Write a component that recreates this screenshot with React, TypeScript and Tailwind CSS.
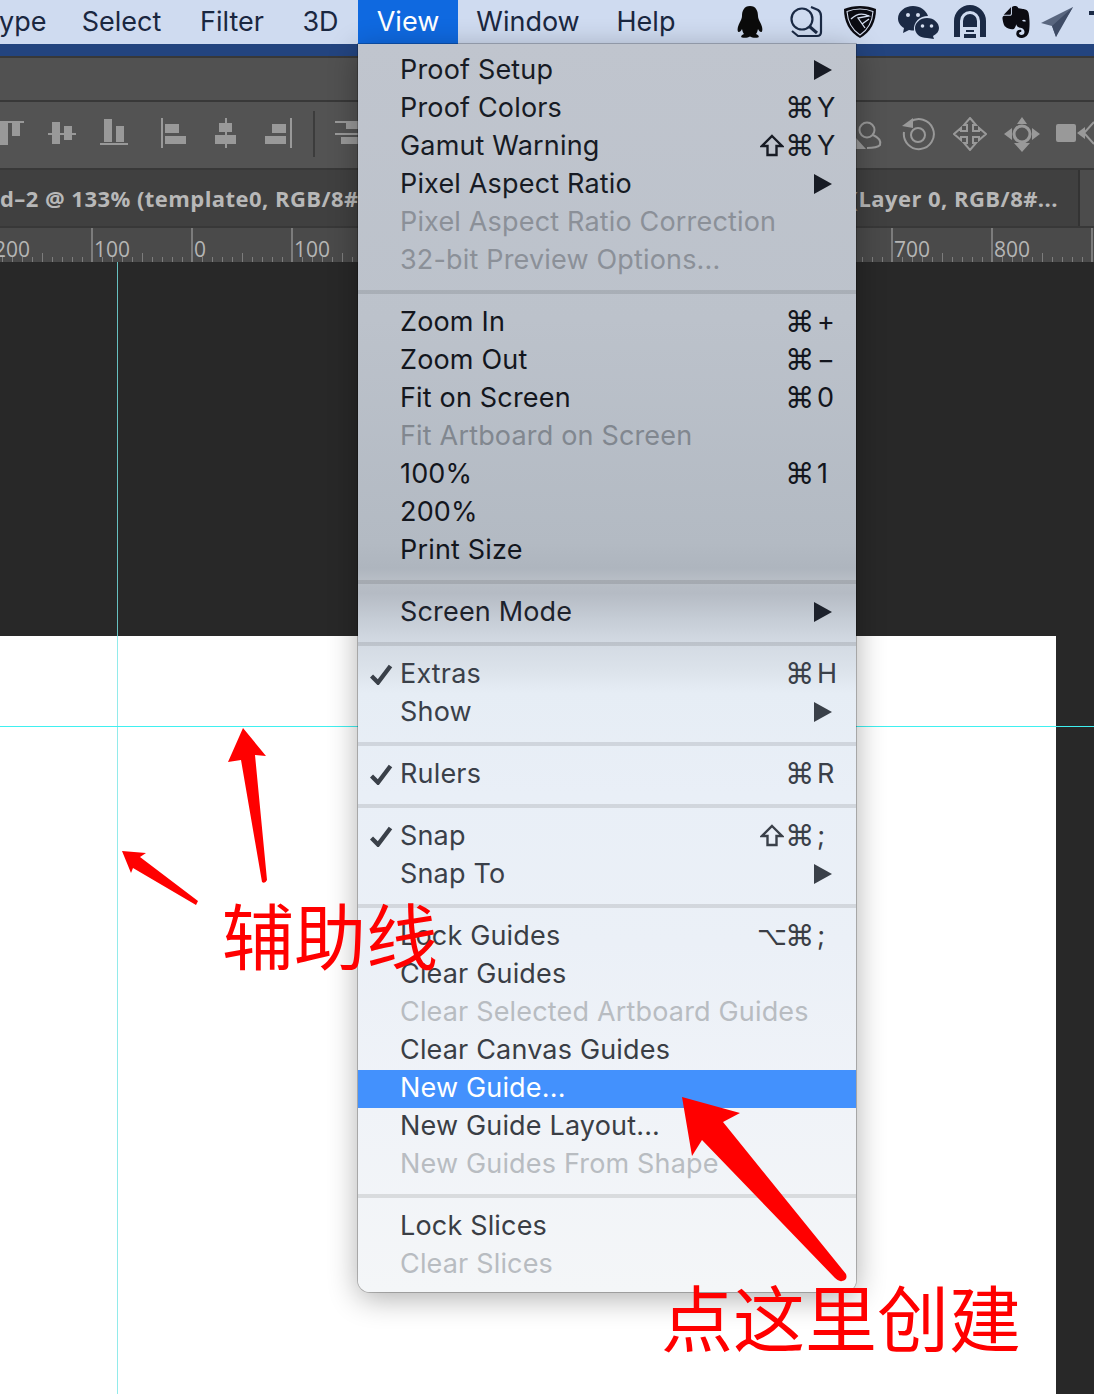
import { SiEvernote } from "react-icons/si";

const uiFont = "font-['Inter','Liberation_Sans',sans-serif]";
const cjkFont = "font-['Noto_Sans_CJK_SC',sans-serif]";

const menuTabs = [
  { label: "Select", w: "w-[119px]" },
  { label: "Filter", w: "w-[102px]" },
  { label: "3D", w: "w-[75px]" },
];

type Row = {
  label: string;
  disabled?: boolean;
  arrow?: boolean;
  check?: boolean;
  shift?: boolean;
  alt?: boolean;
  cmd?: string;
  active?: boolean;
};

type Section = { text: string; dim: string; rows: Row[] };

const sections: Section[] = [
  {
    text: "text-[#171b24]",
    dim: "text-[#8b9098]",
    rows: [
      { label: "Proof Setup", arrow: true },
      { label: "Proof Colors", cmd: "Y" },
      { label: "Gamut Warning", shift: true, cmd: "Y" },
      { label: "Pixel Aspect Ratio", arrow: true },
      { label: "Pixel Aspect Ratio Correction", disabled: true },
      { label: "32-bit Preview Options...", disabled: true },
    ],
  },
  {
    text: "text-[#13161d]",
    dim: "text-[#81878f]",
    rows: [
      { label: "Zoom In", cmd: "+" },
      { label: "Zoom Out", cmd: "−" },
      { label: "Fit on Screen", cmd: "0" },
      { label: "Fit Artboard on Screen", disabled: true },
      { label: "100%", cmd: "1" },
      { label: "200%" },
      { label: "Print Size" },
    ],
  },
  { text: "text-[#1d222c]", dim: "text-[#8b9098]", rows: [{ label: "Screen Mode", arrow: true }] },
  {
    text: "text-[#3a4049]",
    dim: "text-[#b3b8bf]",
    rows: [
      { label: "Extras", check: true, cmd: "H" },
      { label: "Show", arrow: true },
    ],
  },
  { text: "text-[#3a4049]", dim: "text-[#b3b8bf]", rows: [{ label: "Rulers", check: true, cmd: "R" }] },
  {
    text: "text-[#3a4049]",
    dim: "text-[#b3b8bf]",
    rows: [
      { label: "Snap", check: true, shift: true, cmd: ";" },
      { label: "Snap To", arrow: true },
    ],
  },
  {
    text: "text-[#3a3e45]",
    dim: "text-[#b8bcc1]",
    rows: [
      { label: "Lock Guides", alt: true, cmd: ";" },
      { label: "Clear Guides" },
      { label: "Clear Selected Artboard Guides", disabled: true },
      { label: "Clear Canvas Guides" },
      { label: "New Guide...", active: true },
      { label: "New Guide Layout..." },
      { label: "New Guides From Shape", disabled: true },
    ],
  },
  {
    text: "text-[#3a3e45]",
    dim: "text-[#b8bcc1]",
    rows: [{ label: "Lock Slices" }, { label: "Clear Slices", disabled: true }],
  },
];

const rulerLabels = ["200", "100", "0", "100", "200", "300", "400", "500", "600", "700", "800", ""];

const MenuRow = ({ row, text, dim }: { row: Row; text: string; dim: string }) => {
  const color = row.active ? "text-white" : row.disabled ? dim : text;
  return (
    <div className={`flex items-center h-[38px] pb-[3px] ${color} ${row.active ? "bg-[#4391fd]" : ""}`}>
      <div className="w-[42px] pl-[12px] shrink-0">
        {row.check && (
          <svg width="23" height="21" viewBox="0 0 23 21" fill="none" className="block mt-[1px]">
            <path d="M1.5 12 L8 18.5 L20.5 2" stroke="currentColor" strokeWidth="4.4" />
          </svg>
        )}
      </div>
      <div className="flex-1 whitespace-nowrap tracking-[0.17px]">{row.label}</div>
      {row.arrow && (
        <svg width="18" height="20" viewBox="0 0 18 20" className="mr-[24px]">
          <path d="M0 0 L18 10 L0 20 Z" fill="currentColor" />
        </svg>
      )}
      {row.cmd && (
        <div className="flex items-center w-[96px] shrink-0">
          <span className="flex items-center w-[25px] h-[30px] font-['DejaVu_Sans'] text-[26px] leading-[30px]">
            {row.shift && (
              <svg width="24" height="23" viewBox="0 0 24 23" fill="none" stroke="currentColor" strokeWidth="2.4" className="shrink-0">
                <path d="M12 2 L22 12 H16.500 V21 H7.500 V12 H2 Z" />
              </svg>
            )}
            {row.alt && <span className="-ml-[3px]">⌥</span>}
          </span>
          <span className="w-[32px] font-['DejaVu_Sans'] text-[29px] leading-[30px]">⌘</span>
          <span>{row.cmd}</span>
        </div>
      )}
    </div>
  );
};

const AlignIcon = ({ className, d }: { className: string; d: string }) => (
  <svg width="30" height="32" viewBox="0 0 30 32" className={`shrink-0 ${className}`}>
    <path d={d} fill="#999999" />
  </svg>
);

const App = () => {
  return (
    <div className={`relative w-[1094px] h-[1394px] overflow-hidden bg-[#282828] ${uiFont}`}>
      {/* mac menu bar */}
      <div className="flex h-[44px] items-center bg-[#cfdbf0] text-[27px] text-[#1a2740]">
        <div className="w-[63px] -ml-[1px] shrink-0 overflow-hidden text-right pr-[18px] whitespace-nowrap">ype</div>
        {menuTabs.map((t) => (
          <div key={t.label} className={`${t.w} shrink-0 text-center`}>
            {t.label}
          </div>
        ))}
        <div className="flex items-center justify-center shrink-0 h-[44px] w-[100px] bg-[#0f69e0] text-white">View</div>
        <div className="w-[140px] shrink-0 text-center">Window</div>
        <div className="w-[96px] shrink-0 text-center">Help</div>
        <div className="flex shrink-0 items-center">
          <svg width="26" height="32" viewBox="0 0 26 32" className="ml-[43px]">
            <path
              d="M13 0 C7 0 5 5 5 10 C5 12 4 14 2.500 17 C0.500 21 0 25 1.500 26 C2.500 26.500 4 25 5 23 C5.500 25 6 27 7 28 C4 29 3.500 31 5 31.500 C7 32 11 32 13 30.500 C15 32 19 32 21 31.500 C22.500 31 22 29 19 28 C20 27 20.500 25 21 23 C22 25 23.500 26.500 24.500 26 C26 25 25.500 21 23.500 17 C22 14 21 12 21 10 C21 5 19 0 13 0 Z"
              fill="#0b0b0b"
            />
          </svg>
          <svg width="34" height="32" viewBox="0 0 34 32" fill="none" stroke="#1b2a45" strokeWidth="2.2" className="ml-[26px]">
            <circle cx="13" cy="13" r="10.500" />
            <path d="M20.500 20.500 L28 27" strokeWidth="3" />
            <path d="M22 1 L29 4 Q32 6 32 10 V26 Q32 30 28 30 H9 L3 25" />
          </svg>
          <svg width="34" height="34" viewBox="0 0 34 34" className="ml-[20px]">
            <path d="M17 1 Q26 1 33 4 Q33 24 17 33 Q1 24 1 4 Q8 1 17 1 Z" fill="#0b0b12" />
            <path d="M17 4 Q24 4 30 6.500 Q29 22 17 30 Q5 22 4 6.500 Q10 4 17 4 Z" fill="none" stroke="#d5def0" strokeWidth="1.100" />
            <path d="M8 14 Q16 6 26 11 L15 13 L22 23 M19 19 L26 14" fill="none" stroke="#d5def0" strokeWidth="1.300" />
          </svg>
          <svg width="42" height="34" viewBox="0 0 42 34" className="ml-[21px]">
            <path d="M15 1 C7 1 0 6.500 0 13.500 C0 17.500 2.500 21 6 23 L5 28 L11 25 C13 25.500 15 25.500 16 25.500 C15 17 22 11 30 11 C28 5 22 1 15 1 Z" fill="#1b2a45" />
            <circle cx="10" cy="10" r="2" fill="#d5def0" />
            <circle cx="20" cy="10" r="2" fill="#d5def0" />
            <path d="M29 13 C22 13 17 18 17 23 C17 29 22 33 29 33 L36 34 L35 31 C39 29 41 26 41 23 C41 18 36 13 29 13 Z" fill="#1b2a45" />
            <circle cx="24.500" cy="21" r="1.800" fill="#d5def0" />
            <circle cx="33.500" cy="21" r="1.800" fill="#d5def0" />
          </svg>
          <svg width="32" height="34" viewBox="0 0 32 34" className="ml-[14px]">
            <path d="M0 32 V16 A16 16 0 0 1 32 16 V32 H26 V16 A10 10 0 0 0 6 16 V32 Z" fill="#1b2a45" />
            <path d="M9 22 V16 A7 7 0 0 1 23 16 V22 Z M12 25 H20 V27 H12 Z M10 29 H22 V33 H10 Z" fill="#1b2a45" />
          </svg>
          <SiEvernote className="ml-[14px] text-[#0b0b12]" size={32} />
          <svg width="34" height="32" viewBox="0 0 34 32" className="ml-[9px]">
            <path d="M32 1 L0 17 L11 20 L15 31 L18 24 Z" fill="#59667f" />
            <path d="M32 1 L11 20 L15 31 Z" fill="#3f4c66" />
          </svg>
          <svg width="16" height="26" viewBox="0 0 16 26" className="ml-[14px]">
            <path d="M0 2 H16 V6 H0 Z M6 9 H16 V13 H6 Z" fill="#1b2a45" />
          </svg>
        </div>
      </div>

      {/* desktop strip behind the app */}
      <div className="h-[12px] bg-[#23447f]" />

      {/* options bar */}
      <div className="h-[46px] border-t-[2px] border-b-[2px] border-[#383838] bg-[#515151]" />

      {/* align toolbar */}
      <div className="flex items-center h-[66px] pb-[2px] bg-[#535353]">
        <AlignIcon className="ml-[-5px]" d="M0 3 H29 V5 H0 Z M5 5 H13 V27 H5 Z M17 5 H25 V18 H17 Z" />
        <AlignIcon className="ml-[22px]" d="M1 15 H29 V17 H1 Z M5 4 H13 V26 H5 Z M17 8 H25 V22 H17 Z" />
        <AlignIcon className="ml-[22px]" d="M1 25 H29 V27 H1 Z M5 1 H13 V24 H5 Z M17 8 H25 V24 H17 Z" />
        <AlignIcon className="ml-[30px]" d="M2 0 H4 V30 H2 Z M6 6 H20 V15 H6 Z M6 18 H27 V26 H6 Z" />
        <AlignIcon className="ml-[22px]" d="M14 0 H16 V30 H14 Z M8 5 H21 V14 H8 Z M4 17 H25 V26 H4 Z" />
        <AlignIcon className="ml-[22px]" d="M27 0 H29 V30 H27 Z M9 6 H23 V15 H9 Z M2 18 H23 V26 H2 Z" />
        <div className="ml-[20px] h-[46px] w-[2px] bg-[#3c3c3c]" />
        <AlignIcon className="ml-[16px]" d="M4 3 H30 V5 H4 Z M15 5 H30 V11 H15 Z M4 15 H30 V17 H4 Z M10 19 H30 V26 H10 Z" />
        <div className="flex items-center ml-auto">
          <svg width="28" height="32" viewBox="0 0 28 32" fill="none" stroke="#999999" strokeWidth="2">
            <circle cx="11" cy="12" r="7.500" />
            <path d="M17 17 Q26 21 24 27 Q21 30 11 30" />
            <path d="M0 20 L10 31 H0 Z" fill="#999999" stroke="none" />
          </svg>
          <svg width="34" height="34" viewBox="0 0 34 34" fill="none" stroke="#999999" strokeWidth="2" className="ml-[17px]">
            <path d="M9 5 A15 15 0 1 1 3 15" />
            <circle cx="17" cy="18" r="7" />
            <path d="M1 9 L12 1 L12 11 Z" fill="#999999" stroke="none" />
          </svg>
          <svg width="34" height="34" viewBox="0 0 34 34" fill="none" stroke="#999999" strokeWidth="2" className="ml-[18px]">
            <path d="M17 1 L23 8 H20 V14 H26 V11 L33 17 L26 23 V20 H20 V26 H23 L17 33 L11 26 H14 V20 H8 V23 L1 17 L8 11 V14 H14 V8 H11 Z" />
          </svg>
          <svg width="36" height="36" viewBox="0 0 36 36" className="ml-[17px]">
            <circle cx="18" cy="18" r="8" fill="none" stroke="#999999" strokeWidth="3" />
            <path d="M18 1 L23 8 H13 Z M0 18 L8 12 V24 Z M36 18 L28 12 V24 Z M18 36 L10 27 H26 Z" fill="#999999" />
          </svg>
          <svg width="38" height="30" viewBox="0 0 38 30" className="ml-[16px]">
            <path d="M2 5 H18 Q20 5 20 7 V21 Q20 23 18 23 H2 Q0 23 0 21 V7 Q0 5 2 5 Z M21 14 L29 8 V20 Z" fill="#999999" />
            <path d="M38 3 L28 14 L38 25" fill="none" stroke="#999999" strokeWidth="2" />
          </svg>
        </div>
      </div>

      {/* document tabs */}
      <div className="flex h-[60px] border-t-[2px] border-b-[2px] border-[#383838] bg-[#404040] font-['Open_Sans'] font-bold text-[22px] text-[#b8b8b8] tracking-[0.45px] overflow-hidden">
        <div className="w-[358px] flex items-center overflow-hidden whitespace-nowrap shrink-0">d–2 @ 133% (template0, RGB/8#</div>
        <div className="flex items-center justify-end w-[720px] pr-[20px] whitespace-nowrap">(Layer 0, RGB/8#...</div>
        <div className="flex-1 border-l-[2px] border-[#333333] bg-[#4c4c4c]" />
      </div>

      {/* ruler */}
      <div className="flex h-[34px] -ml-[9px] bg-[#4a4a4a] font-['Open_Sans'] text-[21px] leading-[20px] text-[#b5b5b5]">
        {rulerLabels.map((label, i) => (
          <div key={i} className="relative w-[100px] h-[34px] shrink-0 border-l-[2px] border-[#7c7c7c] pl-[1px] pt-[11px]">
            {label}
            <svg width="98" height="10" viewBox="0 0 98 10" className="absolute left-0 bottom-0" stroke="#7c7c7c" strokeWidth="1">
              {[10, 20, 30, 40, 50, 60, 70, 80, 90].map((x) => (
                <line key={x} x1={x - 0.5} x2={x - 0.5} y1={x === 50 ? 1 : 5} y2={10} />
              ))}
            </svg>
          </div>
        ))}
      </div>

      {/* canvas */}
      <div className="h-[374px] bg-[#282828]" />
      <div className="flex h-[758px]">
        <div className="w-[1056px] bg-white" />
      </div>

      {/* guides */}
      <div className="absolute left-[117px] top-[262px] w-px h-[1132px] bg-[#77e6e6] opacity-80" />
      <div className="absolute left-0 top-[726px] h-px w-[1094px] bg-[#3ff0f0]" />

      {/* View menu */}
      <div className="absolute left-[358px] top-[44px] w-[498px] h-[1248px] py-[8px] rounded-b-[12px] text-[27px] leading-[38px] shadow-[0_0_0_1px_rgba(0,0,0,0.22),0_6px_30px_rgba(0,0,0,0.32)] bg-[linear-gradient(180deg,#c0c5ce_0%,#bcc2cb_22%,#b3bac3_40%,#aeb5be_42%,#b8bec6_43%,#b5bbc4_44%,#c5ccd5_46%,#d3dae3_48%,#dbe2ea_50%,#e6edf5_52%,#e9eff7_60%,#ebf0f7_72%,#f0f3f8_85%,#f4f6f8_100%)]">
        {sections.map((s, i) => (
          <div key={i}>
            {i > 0 && <div className="h-[4px] my-[10px] bg-[#000000]/10" />}
            {s.rows.map((r) => (
              <MenuRow key={r.label} row={r} text={s.text} dim={s.dim} />
            ))}
          </div>
        ))}
      </div>

      {/* red annotations */}
      <svg width="1094" height="1394" viewBox="0 0 1094 1394" className="absolute left-0 top-0 pointer-events-none">
        <path d="M243 728 L266 756 L255 755 L267 880 Q265 884 262 882 L241 760 L228 762 Z" fill="#ff0000" />
        <path d="M122 851 L146 853 L140 857 L198 901 L196 905 L133 868 L131 873 Z" fill="#ff0000" />
        <path d="M682 1097 L740 1113 L723 1122 L846 1274 Q848 1280 842 1281 Q839 1282 835 1278 L702 1140 L692 1156 Z" fill="#ff0000" />
      </svg>
      <div className={`absolute left-[222px] top-[883px] text-[72px] leading-[100px] font-normal text-[#ff0000] whitespace-nowrap ${cjkFont}`}>
        辅助线
      </div>
      <div className={`absolute left-[661px] top-[1265px] text-[72px] leading-[100px] font-normal text-[#ff0000] whitespace-nowrap ${cjkFont}`}>
        点这里创建
      </div>
    </div>
  );
};

export default App;
